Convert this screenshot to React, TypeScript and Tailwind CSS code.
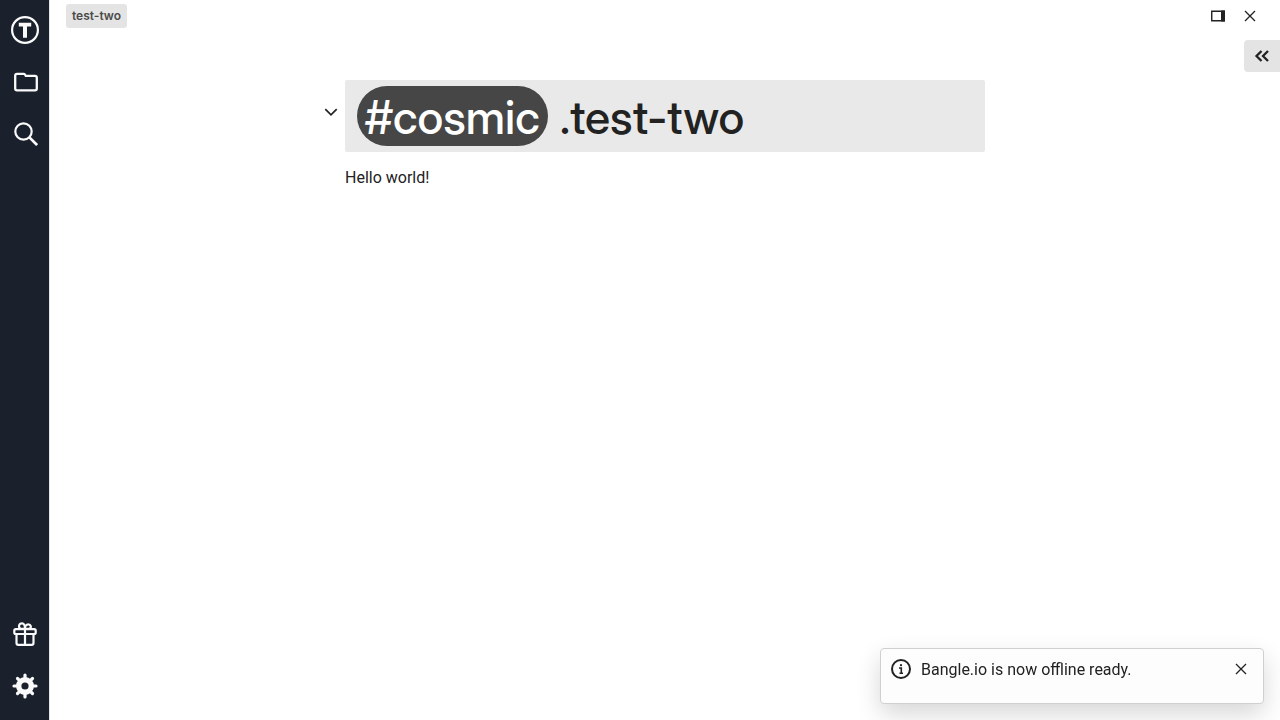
import type { ReactNode } from "react";

function RailButton({ label, children }: { label: string; children: ReactNode }) {
  return (
    <button type="button" aria-label={label} className="flex h-13 w-full items-center justify-center text-[#fafafa]">
      {children}
    </button>
  );
}

function CloseIcon() {
  return (
    <svg viewBox="0 0 16 16" className="size-4" fill="none" stroke="currentColor" strokeWidth="1.3" aria-hidden="true">
      <path d="M3 3l10 10M13 3L3 13" />
    </svg>
  );
}

function Sidebar() {
  return (
    <nav className="flex w-[50px] shrink-0 flex-col border-r border-[#dfe3ea] bg-[#1a202c] pt-1 pb-2">
      <RailButton label="Home">
        <svg viewBox="0 0 28 28" className="size-7" aria-hidden="true">
          <circle cx="14" cy="14" r="12.900" fill="none" stroke="currentColor" strokeWidth="2.200" />
          <path d="M7.800 6.800h12.400v3.600h-4.200v11.400h-4V10.400H7.800z" fill="currentColor" />
        </svg>
      </RailButton>
      <RailButton label="Notes browser">
        <svg viewBox="0 0 24 24" className="ml-0.5 size-6" fill="none" stroke="currentColor" strokeWidth="2.300" strokeLinejoin="round" aria-hidden="true">
          <path d="M3 3.800h6.700q.7 0 1.100.6l1 1.500h9.200q1.800 0 1.800 1.800V18.500q0 1.800-1.800 1.800H3q-1.800 0-1.800-1.800v-12.900q0-1.800 1.800-1.800z" />
        </svg>
      </RailButton>
      <RailButton label="Search notes">
        <svg viewBox="0 0 24 24" className="ml-0.5 size-6" fill="none" stroke="currentColor" strokeWidth="2.200" aria-hidden="true">
          <circle cx="9.500" cy="9.500" r="8.200" />
          <path d="M15.400 15.400l7.700 7.700" strokeWidth="2.700" />
        </svg>
      </RailButton>
      <div className="grow" />
      <RailButton label="What's new">
        <svg viewBox="0 0 24 24" className="size-6" fill="none" stroke="currentColor" strokeWidth="2.200" strokeLinejoin="round" aria-hidden="true">
          <rect x="1.300" y="7.200" width="21.400" height="4.800" rx="1.500" />
          <path d="M3.500 12v9q0 1.800 1.800 1.800h13.400q1.800 0 1.800-1.800v-9M12 7v15.500" />
          <path d="M12 6.800H7.500C5 5.500 5.800 1.400 9 1.400c2.200 0 3 2.600 3 5.400zM12 6.800h4.500c2.300-1.300 1.500-4.400-1.300-4.400-1.900 0-3.200 2-3.200 4.400z" />
        </svg>
      </RailButton>
      <RailButton label="Options">
        <svg viewBox="-13 -13 26 26" className="size-[26px]" aria-hidden="true">
          <circle r="6.300" fill="none" stroke="currentColor" strokeWidth="5.400" />
          <path
            d="M0-8V-11M0 8V11M-8 0H-11M8 0H11M-5.800-5.800L-7.500-7.500M5.800 5.800L7.500 7.500M-5.800 5.800L-7.500 7.500M5.800-5.800L7.500-7.500"
            stroke="currentColor"
            strokeWidth="3.200"
            strokeLinecap="round"
          />
        </svg>
      </RailButton>
    </nav>
  );
}

export default function App() {
  return (
    <div className="flex min-h-screen bg-white font-['Roboto',sans-serif] text-base text-[#222222]">
      <Sidebar />
      <div className="flex min-w-0 grow flex-col">
        <header className="flex h-8 items-center justify-between pr-3.5 pl-4">
          <button type="button" className="h-6 rounded-[3px] bg-[#e4e4e4] px-1.5 font-['Inter',sans-serif] text-xs font-semibold text-[#4b4b4b]">
            test-two
          </button>
          <div className="flex">
            <button type="button" aria-label="Split screen" className="flex size-8 items-center justify-center">
              <svg viewBox="0 0 14 12" className="h-3 w-3.5" aria-hidden="true">
                <path d="M.75 1.200h12.500v9.600H.75z" fill="none" stroke="currentColor" strokeWidth="1.400" />
                <path d="M10 .5h4v11h-4z" fill="currentColor" />
              </svg>
            </button>
            <button type="button" aria-label="Close" className="flex size-8 items-center justify-center">
              <CloseIcon />
            </button>
          </div>
        </header>
        <div className="flex justify-end pt-2">
          <button type="button" aria-label="Show note widgets" className="flex h-8 w-9 items-center justify-center rounded-l-[4px] bg-[#e4e4e4]">
            <svg viewBox="0 0 16 14" className="h-3.5 w-4" fill="none" stroke="currentColor" strokeWidth="2.300" aria-hidden="true">
              <path d="M7.500 2L2.500 7l5 5M14 2L9 7l5 5" />
            </svg>
          </button>
        </div>
        <main className="mx-auto mt-2 w-full max-w-[640px]">
          <div className="relative">
            <button type="button" aria-label="Collapse heading" className="absolute top-6 -left-6 flex h-4 w-5 items-center justify-center">
              <svg viewBox="0 0 14 10" className="h-2.5 w-3.5" fill="none" stroke="currentColor" strokeWidth="1.700" aria-hidden="true">
                <path d="M1.300 2.200L7 7.800l5.700-5.600" />
              </svg>
            </button>
            <h1 className="flex h-18 items-center gap-3 rounded-xs bg-[#e9e9e9] px-3 font-['Inter_Display','Inter',sans-serif] text-[46px] leading-none font-medium">
              <span className="flex h-[60px] items-center rounded-full bg-[#464646] px-2 pt-0.5 text-white">#cosmic</span>
              <span className="pt-0.5">.test-two</span>
            </h1>
          </div>
          <p className="mt-3 leading-7">Hello world!</p>
        </main>
      </div>
      <div role="status" className="fixed right-4 bottom-4 flex h-14 w-96 items-start rounded-[4px] border border-[#d0d0d0] bg-[#fdfdfd] pt-1.5 pr-2 pl-2.5 leading-7 shadow-[0_10px_24px_rgba(0,0,0,0.16)]">
        <svg viewBox="0 0 20 20" className="mt-1 size-5 shrink-0" aria-hidden="true">
          <circle cx="10" cy="10" r="9" fill="none" stroke="currentColor" strokeWidth="2" />
          <circle cx="10" cy="6.200" r="1.100" fill="currentColor" />
          <path d="M8 9h2.300v5.200M8.500 14.200H12" fill="none" stroke="currentColor" strokeWidth="1.600" />
        </svg>
        <p className="ml-2.5 grow pt-px">Bangle.io is now offline ready.</p>
        <button type="button" aria-label="Close notification" className="flex size-7 items-center justify-center">
          <CloseIcon />
        </button>
      </div>
    </div>
  );
}
